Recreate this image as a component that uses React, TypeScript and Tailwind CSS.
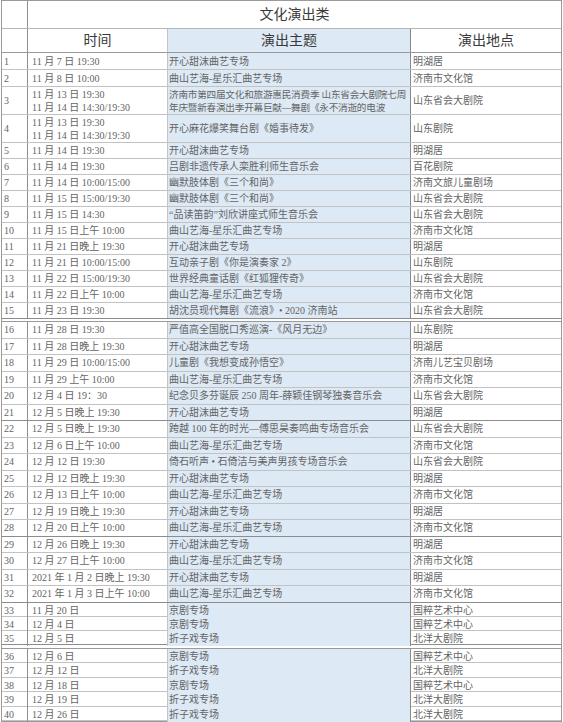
type Row = {
  n: number;
  time: string[];
  theme: string[];
  place: string;
};

const r = (n: number, time: string | string[], theme: string | string[], place: string): Row => ({
  n,
  time: Array.isArray(time) ? time : [time],
  theme: Array.isArray(theme) ? theme : [theme],
  place,
});

const rows: Row[] = [
  r(1, "11 月 7 日 19:30", "开心甜沫曲艺专场", "明湖居"),
  r(2, "11 月 8 日 10:00", "曲山艺海-星乐汇曲艺专场", "济南市文化馆"),
  r(
    3,
    ["11 月 13 日 19:30", "11 月 14 日 14:30/19:30"],
    ["济南市第四届文化和旅游惠民消费季 山东省会大剧院七周", "年庆暨新春演出季开幕巨献—舞剧《永不消逝的电波"],
    "山东省会大剧院"
  ),
  r(4, ["11 月 13 日 19:30", "11 月 14 日 14:30/19:30"], "开心麻花爆笑舞台剧《婚事待发》", "山东剧院"),
  r(5, "11 月 14 日 19:30", "开心甜沫曲艺专场", "明湖居"),
  r(6, "11 月 14 日 19:30", "吕剧非遗传承人栾胜利师生音乐会", "百花剧院"),
  r(7, "11 月 14 日 10:00/15:00", "幽默肢体剧《三个和尚》", "济南文旅儿童剧场"),
  r(8, "11 月 15 日 15:00/19:30", "幽默肢体剧《三个和尚》", "山东省会大剧院"),
  r(9, "11 月 15 日 14:30", "“品读笛韵”刘欣讲座式师生音乐会", "山东省会大剧院"),
  r(10, "11 月 15 日上午 10:00", "曲山艺海-星乐汇曲艺专场", "济南市文化馆"),
  r(11, "11 月 21 日晚上 19:30", "开心甜沫曲艺专场", "明湖居"),
  r(12, "11 月 21 日 10:00/15:00", "互动亲子剧《你是演奏家 2》", "山东剧院"),
  r(13, "11 月 22 日 15:00/19:30", "世界经典童话剧《红狐狸传奇》", "山东省会大剧院"),
  r(14, "11 月 22 日上午 10:00", "曲山艺海-星乐汇曲艺专场", "济南市文化馆"),
  r(15, "11 月 23 日 19:30", "胡沈员现代舞剧《流浪》• 2020 济南站", "山东省会大剧院"),
  r(16, "11 月 28 日 19:30", "严值高全国脱口秀巡演-《风月无边》", "山东剧院"),
  r(17, "11 月 28 日晚上 19:30", "开心甜沫曲艺专场", "明湖居"),
  r(18, "11 月 29 日 10:00/15:00", "儿童剧《我想变成孙悟空》", "济南儿艺宝贝剧场"),
  r(19, "11 月 29 上午 10:00", "曲山艺海-星乐汇曲艺专场", "济南市文化馆"),
  r(20, "12 月 4 日 19：30", "纪念贝多芬诞辰 250 周年-薛颖佳钢琴独奏音乐会", "山东省会大剧院"),
  r(21, "12 月 5 日晚上 19:30", "开心甜沫曲艺专场", "明湖居"),
  r(22, "12 月 5 日晚上 19:30", "跨越 100 年的时光—傅思昊奏鸣曲专场音乐会", "山东省会大剧院"),
  r(23, "12 月 6 日上午 10:00", "曲山艺海-星乐汇曲艺专场", "济南市文化馆"),
  r(24, "12 月 12 日 19:30", "倚石听声 • 石倚洁与美声男孩专场音乐会", "山东省会大剧院"),
  r(25, "12 月 12 日晚上 19:30", "开心甜沫曲艺专场", "明湖居"),
  r(26, "12 月 13 日上午 10:00", "曲山艺海-星乐汇曲艺专场", "济南市文化馆"),
  r(27, "12 月 19 日晚上 19:30", "开心甜沫曲艺专场", "明湖居"),
  r(28, "12 月 20 日上午 10:00", "曲山艺海-星乐汇曲艺专场", "济南市文化馆"),
  r(29, "12 月 26 日晚上 19:30", "开心甜沫曲艺专场", "明湖居"),
  r(30, "12 月 27 日上午 10:00", "曲山艺海-星乐汇曲艺专场", "济南市文化馆"),
  r(31, "2021 年 1 月 2 日晚上 19:30", "开心甜沫曲艺专场", "明湖居"),
  r(32, "2021 年 1 月 3 日上午 10:00", "曲山艺海-星乐汇曲艺专场", "济南市文化馆"),
  r(33, "11 月 20 日", "京剧专场", "国粹艺术中心"),
  r(34, "12 月 4 日", "京剧专场", "国粹艺术中心"),
  r(35, "12 月 5 日", "折子戏专场", "北洋大剧院"),
  r(36, "12 月 6 日", "京剧专场", "国粹艺术中心"),
  r(37, "12 月 12 日", "折子戏专场", "北洋大剧院"),
  r(38, "12 月 18 日", "京剧专场", "国粹艺术中心"),
  r(39, "12 月 19 日", "折子戏专场", "北洋大剧院"),
  r(40, "12 月 26 日", "折子戏专场", "北洋大剧院"),
];

function heightFor(n: number) {
  if (n <= 2) return "h-[17px]";
  if (n <= 4) return "h-[28px]";
  if (n <= 15) return "h-[16px]";
  if (n <= 32) return "h-[16.5px]";
  if (n <= 35) return "h-[14px]";
  return "h-[14.5px]";
}

function BodyRow({ row }: { row: Row }) {
  const strong = [15, 21, 28, 32, 35].includes(row.n);
  return (
    <div
      className={`grid grid-cols-[26px_140px_243px_1fr] border-b ${
        strong ? "border-[#8c8c8c]" : "border-[#c2c2c2]"
      } ${heightFor(row.n)}`}
    >
      <div className="flex items-center pl-[2px] border-r border-[#8f8f8f]">{row.n}</div>
      <div className="flex flex-col justify-center pl-[4px] leading-[13px] border-r border-[#c4c4c4] whitespace-nowrap">
        {row.time.map((t) => (
          <span key={t}>{t}</span>
        ))}
      </div>
      <div
        className={`flex flex-col justify-center pl-[1px] bg-[#dde9f5] border-r border-[#8a8a8a] whitespace-nowrap ${
          row.theme.length > 1 ? "text-[9.6px] leading-[13px] tracking-[-0.2px]" : ""
        }`}
      >
        {row.theme.map((t) => (
          <span key={t}>{t}</span>
        ))}
      </div>
      <div className="flex items-center pl-[2px] whitespace-nowrap">{row.place}</div>
    </div>
  );
}

export default function App() {
  const first = rows.filter((x) => x.n <= 15);
  const middle = rows.filter((x) => x.n > 15 && x.n <= 35);
  const last = rows.filter((x) => x.n > 35);
  return (
    <div
      className="w-[563px] h-[722px] bg-white text-[#646464] text-[10px] overflow-hidden"
      style={{ fontFamily: '"Liberation Serif", "Noto Sans CJK SC", serif' }}
    >
      <div className="w-[561px] ml-[1px] border border-[#9a9a9a]">
        <div className="grid grid-cols-[26px_1fr] h-[28px] border-b border-[#b5b5b5]">
          <div className="border-r border-[#8f8f8f]" />
          <div className="flex items-center justify-center text-[14px] text-[#3a3a3a]">文化演出类</div>
        </div>
        <div className="grid grid-cols-[26px_140px_243px_1fr] h-[24px] border-b border-[#9a9a9a] text-[14px] text-[#3a3a3a]">
          <div className="border-r border-[#8f8f8f]" />
          <div className="flex items-center justify-center border-r border-[#c4c4c4]">时间</div>
          <div className="flex items-center justify-center bg-[#dde9f5] border-r border-[#8a8a8a]">演出主题</div>
          <div className="flex items-center justify-center">演出地点</div>
        </div>
        {first.map((row) => (
          <BodyRow key={row.n} row={row} />
        ))}
        <div className="h-[3px] border-b border-[#9a9a9a]" />
        {middle.map((row) => (
          <BodyRow key={row.n} row={row} />
        ))}
        <div className="h-[4px] border-b border-[#9a9a9a]" />
        {last.map((row) => (
          <BodyRow key={row.n} row={row} />
        ))}
      </div>
    </div>
  );
}
